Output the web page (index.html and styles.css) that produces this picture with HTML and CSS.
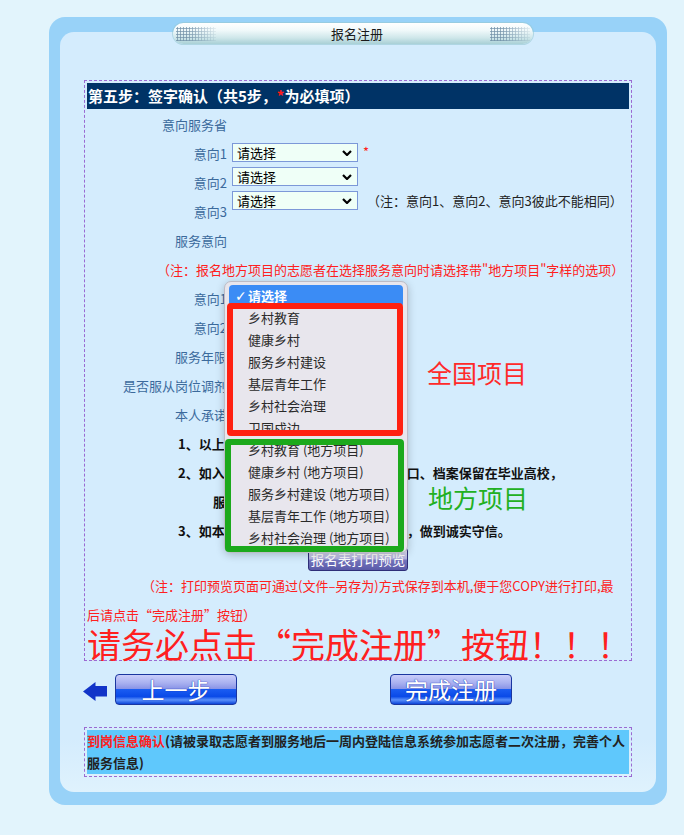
FILE: index.html
```html
<!DOCTYPE html>
<html lang="zh-CN">
<head>
<meta charset="utf-8">
<title>报名注册</title>
<link rel="stylesheet" href="styles.css">
</head>
<body>
<div class="page">
  <div class="outer">
    <div class="tab">
      <span class="dots"></span>
      <span class="tab-title">报名注册</span>
      <span class="dots"></span>
    </div>
    <div class="inner">
      <div class="formbox">
        <div class="stephead">第五步：签字确认（共5步，<span class="req">*</span>为必填项）</div>
        <div class="rows">
          <div class="lbl">意向服务省</div>

          <div class="lbl">意向1</div>
          <div class="sels">
            <div class="selline">
              <div class="sel"><span>请选择</span><svg class="chev" viewBox="0 0 10 6"><path d="M1 1l4 4 4-4"/></svg></div>
              <span class="star">*</span>
            </div>
            <div class="selline">
              <div class="sel"><span>请选择</span><svg class="chev" viewBox="0 0 10 6"><path d="M1 1l4 4 4-4"/></svg></div>
            </div>
            <div class="selline">
              <div class="sel"><span>请选择</span><svg class="chev" viewBox="0 0 10 6"><path d="M1 1l4 4 4-4"/></svg></div>
              <span class="hint">（注：意向1、意向2、意向3彼此不能相同）</span>
            </div>
          </div>
          <div class="lbl">意向2</div>
          <div class="lbl">意向3</div>

          <div class="lbl">服务意向</div>
          <div class="note-red">（注：报名地方项目的志愿者在选择服务意向时请选择带"地方项目"字样的选项）</div>

          <div class="lbl">意向1</div>
          <div class="cell"><div class="sel"><span>请选择</span><svg class="chev" viewBox="0 0 10 6"><path d="M1 1l4 4 4-4"/></svg></div></div>
          <div class="lbl">意向2</div>
          <div class="cell"><div class="sel"><span>请选择</span><svg class="chev" viewBox="0 0 10 6"><path d="M1 1l4 4 4-4"/></svg></div></div>
          <div class="lbl">服务年限</div>
          <div class="cell"><div class="sel short"><span>请选择</span><svg class="chev" viewBox="0 0 10 6"><path d="M1 1l4 4 4-4"/></svg></div></div>
          <div class="lbl">是否服从岗位调剂</div>
          <div class="cell"><div class="sel short"><span>请选择</span><svg class="chev" viewBox="0 0 10 6"><path d="M1 1l4 4 4-4"/></svg></div></div>
          <div class="lbl">本人承诺</div>

          <div class="promise">1、以上信息真实有效。</div>
          <div class="promise">2、如入选西部计划志愿者，本人同意户口、档案保留在毕业高校，</div>
          <div class="promise indent">服务期满后自主择业。</div>
          <div class="promise">3、如本人放弃，须提前告知项目办公室，做到诚实守信。</div>
        </div>
        <div class="printrow"><div class="printbtn">报名表打印预览</div></div>
        <div class="note2"><span class="nowrap">（注：打印预览页面可通过(文件–另存为)方式保存到本机,便于您COPY进行打印,最</span><br>后请点击“完成注册”按钮）</div>
        <div class="bignote">请务必点击“完成注册”按钮！！！</div>
      </div>

      <div class="navbar">
        <div class="back">
          <svg class="arrow" width="24" height="19" viewBox="0 0 24 19"><path d="M0 9.5 L12.5 0 V4 H24 V14.5 H12.5 V19 Z"/></svg>
          <div class="bigbtn">上一步</div>
        </div>
        <div class="bigbtn finish">完成注册</div>
      </div>

      <div class="infobox">
        <div class="infobox-inner"><span class="red">到岗信息确认</span>(请被录取志愿者到服务地后一周内登陆信息系统参加志愿者二次注册，完善个人<br>服务信息)</div>
      </div>
    </div>
  </div>

  <div class="popup">
    <div class="opt on"><span class="ck">✓</span>请选择</div>
    <div class="opt">乡村教育</div>
    <div class="opt">健康乡村</div>
    <div class="opt">服务乡村建设</div>
    <div class="opt">基层青年工作</div>
    <div class="opt">乡村社会治理</div>
    <div class="opt">卫国戍边</div>
    <div class="opt">乡村教育 (地方项目)</div>
    <div class="opt">健康乡村 (地方项目)</div>
    <div class="opt">服务乡村建设 (地方项目)</div>
    <div class="opt">基层青年工作 (地方项目)</div>
    <div class="opt">乡村社会治理 (地方项目)</div>
  </div>
  <div class="frame frame-red"></div>
  <div class="frame frame-green"></div>
  <div class="tag tag-red">全国项目</div>
  <div class="tag tag-green">地方项目</div>
</div>
</body>
</html>
```

FILE: styles.css
```css
html, body {
  margin: 0;
  padding: 0;
}
body {
  background: #e2f4fc;
  font-family: "Noto Sans CJK SC", "Noto Sans", "Liberation Sans", sans-serif;
  font-size: 13px;
  color: #222;
}
.page {
  position: relative;
  width: 684px;
  height: 835px;
  overflow: hidden;
  padding-top: 17px;
  box-sizing: border-box;
}
.outer {
  margin-left: 49px;
  width: 618px;
  box-sizing: border-box;
  background: #98d2f8;
  border-radius: 16px;
  padding: 6px 11px 13px;
}
.tab {
  position: relative;
  z-index: 1;
  margin: 0 0 -12px 113px;
  width: 360px;
  height: 21px;
  box-sizing: border-box;
  border-radius: 11px;
  background: linear-gradient(#ffffff 0%, #f0f9fa 35%, #cfe7ea 70%, #a9d0d6 100%);
  box-shadow: 0 0 0 1px rgba(150, 200, 210, 0.6);
  display: flex;
  align-items: center;
  justify-content: space-between;
  padding: 0 3px;
}
.dots {
  width: 40px;
  height: 14px;
  background-image: radial-gradient(circle, #6a8aa2 0.9px, transparent 1.4px);
  background-size: 3px 3px;
  -webkit-mask-image: linear-gradient(90deg, #000 30%, rgba(0,0,0,0.15));
  mask-image: linear-gradient(90deg, #000 30%, rgba(0,0,0,0.15));
  opacity: 0.85;
}
.tab-title {
  font-size: 13px;
  line-height: 21px;
  color: #1a1a1a;
  padding-left: 8px;
}
.inner {
  background: linear-gradient(#d4ecfd 93%, #dff2fd 100%);
  border-radius: 14px;
  padding: 48px 24px 15px;
}
.formbox {
  width: 548px;
  box-sizing: border-box;
  border: 1px dashed #9b6ad2;
  padding: 2px;
}
.stephead {
  height: 26px;
  background: #003366;
  color: #fff;
  font-weight: bold;
  font-size: 15px;
  line-height: 26px;
  padding-left: 1px;
  white-space: nowrap;
}
.req {
  color: #ff1a1a;
}
.rows {
  margin-top: 1px;
  display: grid;
  grid-template-columns: 145px 1fr;
  grid-auto-rows: 29px;
}
.lbl {
  grid-column: 1;
  text-align: right;
  padding-right: 5px;
  line-height: 29px;
  color: #3b6a9c;
  white-space: nowrap;
}
.sels {
  grid-column: 2;
  grid-row: span 3;
  padding-top: 4px;
  display: flex;
  flex-direction: column;
  gap: 5px;
}
.selline {
  display: flex;
  align-items: center;
  height: 19px;
}
.cell {
  grid-column: 2;
  display: flex;
  align-items: center;
}
.sel {
  width: 126px;
  height: 19px;
  box-sizing: border-box;
  border: 1px solid #7c98d8;
  background: #effff7;
  display: flex;
  align-items: center;
  justify-content: space-between;
  padding: 0 5px 0 4px;
  font-size: 13px;
  line-height: 17px;
  color: #000;
}
.sel.short {
  width: 90px;
}
.chev {
  width: 10px;
  height: 6px;
  fill: none;
  stroke: #000;
  stroke-width: 2.2;
}
.star {
  color: #ff1a1a;
  margin-left: 5px;
  font-size: 13px;
  line-height: 13px;
  align-self: flex-start;
  padding-top: 2px;
}
.hint {
  margin-left: 9px;
  color: #222;
  white-space: nowrap;
}
.note-red {
  grid-column: 1 / -1;
  color: #ff2020;
  line-height: 29px;
  padding-left: 70px;
  white-space: nowrap;
}
.promise {
  grid-column: 1 / -1;
  font-weight: bold;
  color: #111;
  line-height: 29px;
  padding-left: 91px;
  white-space: nowrap;
}
.promise.indent {
  padding-left: 126px;
}
.printrow {
  height: 26px;
  display: flex;
  justify-content: center;
  align-items: flex-end;
}
.printbtn {
  width: 100px;
  height: 23px;
  box-sizing: border-box;
  border: 1px solid #2e2e78;
  border-radius: 3px;
  background: linear-gradient(#ececfa 0%, #b4b4e2 45%, #7474bc 55%, #5a5aa8 100%);
  color: #fff;
  font-size: 13.5px;
  line-height: 21px;
  text-align: center;
  white-space: nowrap;
}
.note2 {
  color: #ff2020;
  line-height: 29px;
  text-indent: 55px;
}
.nowrap {
  white-space: nowrap;
}
.bignote {
  color: #ff2020;
  font-size: 34px;
  line-height: 29px;
  white-space: nowrap;
}
.navbar {
  display: flex;
  align-items: center;
  margin-top: 12px;
  height: 32px;
}
.back {
  display: flex;
  align-items: center;
  gap: 8px;
  margin-left: -1px;
}
.arrow {
  fill: #1234c8;
  margin-top: 4px;
}
.bigbtn {
  width: 122px;
  height: 31px;
  box-sizing: border-box;
  border: 1px solid #1a36a0;
  border-radius: 4px;
  background: linear-gradient(#c9cdfa 0%, #a8b0f0 28%, #8893e6 48%, #1a5cf2 50%, #0a4ae8 74%, #5a90fa 86%, #0c44d8 100%);
  color: #fff;
  font-size: 23px;
  line-height: 29px;
  text-align: center;
  text-shadow: 0 0 1px #1d3ab8, 0 0 1px #1d3ab8;
  white-space: nowrap;
}
.bigbtn.finish {
  margin-left: 153px;
}
.infobox {
  margin-top: 22px;
  width: 548px;
  box-sizing: border-box;
  border: 1px dashed #9b6ad2;
  padding: 2px;
}
.infobox-inner {
  background: #5fc8fc;
  font-weight: bold;
  font-size: 13px;
  line-height: 22px;
  color: #222;
  white-space: nowrap;
}
.red {
  color: #ff2020;
}
.popup {
  position: absolute;
  left: 224px;
  top: 281px;
  width: 184px;
  height: 272px;
  box-sizing: border-box;
  border: 1px solid #bdbcc6;
  border-radius: 7px;
  background: #e8e6ed;
  box-shadow: 0 2px 8px rgba(0, 0, 0, 0.22);
  padding: 3px 4px;
}
.opt {
  height: 22px;
  line-height: 22px;
  padding-left: 19px;
  color: #2a2a2a;
  white-space: nowrap;
}
.opt.on {
  background: #3b8cf5;
  color: #fff;
  font-weight: bold;
  border-radius: 4px;
  padding-left: 6px;
}
.ck {
  display: inline-block;
  width: 13px;
  font-family: "DejaVu Sans", sans-serif;
  font-size: 14px;
}
.frame {
  position: absolute;
  box-sizing: border-box;
  border-radius: 4px;
}
.frame-red {
  left: 227px;
  top: 303px;
  width: 176px;
  height: 133px;
  border: 6px solid #ff2010;
}
.frame-green {
  left: 225px;
  top: 439px;
  width: 179px;
  height: 113px;
  border: 6px solid #1ca91c;
}
.tag {
  position: absolute;
  font-size: 25px;
  line-height: 27px;
  white-space: nowrap;
}
.tag-red {
  left: 427px;
  top: 359px;
  color: #ff2a2a;
}
.tag-green {
  left: 428px;
  top: 484px;
  color: #22b022;
}
```
